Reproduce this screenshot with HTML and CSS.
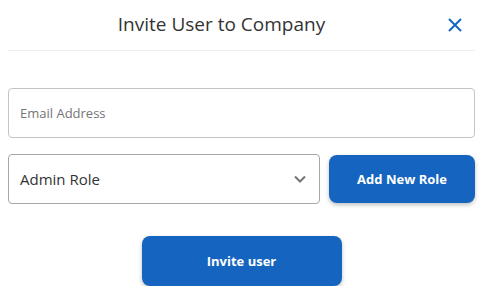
FILE: index.html
```html
<!DOCTYPE html>
<html lang="en">
  <head>
    <meta charset="UTF-8" />
    <meta name="viewport" content="width=device-width, initial-scale=1.0" />
    <title>Invite User to Company</title>
    <link rel="stylesheet" href="styles.css">
  </head>
  <body>
    <div class="dialog">
      <div class="header">
        <h2 class="title">Invite User to Company</h2>
        <button class="close" aria-label="Close">
          <svg width="16" height="16" viewBox="0 0 16 16">
            <path d="M2 2 L14 14 M14 2 L2 14" stroke="#1565c0" stroke-width="2" fill="none" />
          </svg>
        </button>
      </div>
      <div class="form">
        <input class="field" type="email" placeholder="Email Address" />
        <div class="row">
          <div class="select">
            <span>Admin Role</span>
            <svg width="14" height="14" viewBox="0 0 14 14">
              <path d="M2 4.5 L7 9.5 L12 4.5" stroke="#757575" stroke-width="2" fill="none" />
            </svg>
          </div>
          <button class="button add">Add New Role</button>
        </div>
        <div class="actions">
          <button class="button invite">Invite user</button>
        </div>
      </div>
    </div>
  </body>
</html>
```

FILE: styles.css
```css
body {
  margin: 0;
  font-family: "Open Sans", "Noto Sans", sans-serif;
  background-color: white;
  color: #333;
}

.dialog {
  padding: 0 8px;
}

.header {
  display: flex;
  align-items: center;
  height: 50px;
  border-bottom: 1px solid #eeeeee;
}

.title {
  flex: 1;
  margin: 0 0 3px;
  text-align: center;
  font-size: 19px;
  font-weight: 400;
  color: #333;
}

.close {
  width: 40px;
  height: 40px;
  display: flex;
  justify-content: center;
  align-items: center;
  border: none;
  background: none;
  padding: 0;
  cursor: pointer;
}

.form {
  padding-top: 37px;
}

.field {
  display: block;
  box-sizing: border-box;
  width: 100%;
  height: 50px;
  padding: 0 11px;
  border: 1px solid #c4c4c4;
  border-radius: 4px;
  font-family: inherit;
  font-size: 13px;
  color: #333;
}

.field::placeholder {
  color: #757575;
}

.row {
  display: flex;
  align-items: center;
  gap: 9px;
  margin-top: 16px;
}

.select {
  box-sizing: border-box;
  width: 312px;
  height: 50px;
  display: flex;
  align-items: center;
  justify-content: space-between;
  padding: 0 12px 0 11px;
  border: 1px solid #a8a8a8;
  border-radius: 4px;
  font-size: 15px;
  color: #333;
}

.button {
  border: none;
  border-radius: 8px;
  background-color: #1565c0;
  color: white;
  font-family: inherit;
  font-size: 13px;
  font-weight: 700;
  cursor: pointer;
  box-shadow: 0 2px 4px rgba(0, 0, 0, 0.25);
}

.add {
  flex: 1;
  height: 48px;
}

.actions {
  display: flex;
  justify-content: center;
  margin-top: 32px;
}

.invite {
  width: 200px;
  height: 50px;
}
```
